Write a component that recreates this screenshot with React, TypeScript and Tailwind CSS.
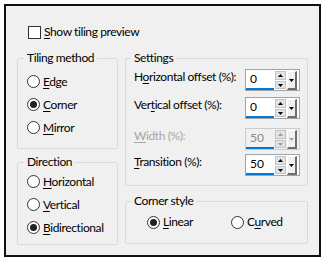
import React from 'react'

const U = ({ children }: { children: React.ReactNode }) => (
  <span className="underline decoration-1 underline-offset-[2px]">{children}</span>
)

function Radio({ checked, label }: { checked?: boolean; label: React.ReactNode }) {
  return (
    <div className="flex items-center gap-[3px]">
      <div className="w-[13px] h-[13px] rounded-full border border-[#333] bg-white flex items-center justify-center">
        {checked && <div className="w-[7px] h-[7px] rounded-full bg-[#222]" />}
      </div>
      <span className="whitespace-nowrap">{label}</span>
    </div>
  )
}

function Tri({ up, color }: { up?: boolean; color: string }) {
  return (
    <svg width="5" height="3" viewBox="0 0 5 3">
      <path d={up ? 'M0 3L2.5 0L5 3Z' : 'M0 0L5 0L2.5 3Z'} fill={color} />
    </svg>
  )
}

function Spin({ value, disabled }: { value: string; disabled?: boolean }) {
  const arrow = disabled ? '#a0a0a0' : '#000'
  return (
    <div
      className={
        'w-[55px] h-[22px] border flex shrink-0 tracking-normal ' +
        (disabled ? 'border-[#cccccc] bg-[#f0f0f0]' : 'border-[#a3a3a3] bg-white')
      }
    >
      <div className="flex-1 flex flex-col pl-[4px] pt-[1px]">
        <span className={'leading-[16px] h-[17px] ' + (disabled ? 'text-[#8a8a8a]' : 'text-black')}>{value}</span>
        <div className="w-[28px] h-[2px] bg-[#0078d7] -ml-[4px]" />
      </div>
      <div className="w-[11px] flex flex-col gap-[1px] py-[1px] mr-[1px]">
        <div className="h-[9px] bg-[#e3e3e3] border border-[#c4c4c4] flex items-center justify-center">
          <Tri up color={arrow} />
        </div>
        <div className="h-[8px] bg-[#e3e3e3] border border-[#c4c4c4] flex items-center justify-center">
          <Tri color={arrow} />
        </div>
      </div>
      <div className="w-[10px] mt-[1px] mr-[2px] bg-[#f0f0f0] border-t border-l border-t-white border-l-white border-r-2 border-b-2 border-r-[#6d6d6d] border-b-[#6d6d6d] flex items-center justify-center">
        <Tri color={arrow} />
      </div>
    </div>
  )
}

function Row({ label, value, disabled, className }: { label: React.ReactNode; value: string; disabled?: boolean; className: string }) {
  return (
    <div className={'flex items-start ' + className}>
      <span className={'w-[111px] whitespace-nowrap leading-[16px] ' + (disabled ? 'text-[#a6a6a6]' : '')}>{label}</span>
      <Spin value={value} disabled={disabled} />
    </div>
  )
}

export default function App() {
  return (
    <div className="w-[325px] h-[260px] bg-white p-1 text-[12px] leading-[16px] tracking-[-0.4px] text-black font-['Lato',sans-serif]">
      <div className="h-[253px] border-2 border-[#111] bg-[#f0f0f0]">
        <div className="pl-[22px] pt-[18px] flex items-center gap-[3px] h-[34px]">
          <div className="w-[13px] h-[13px] border border-[#333] bg-white" />
          <span>
            <U>S</U>how tiling preview
          </span>
        </div>

        <div className="flex mt-[10px] ml-[11px]">
          <div className="w-[101px] flex flex-col">
            <fieldset className="h-[99px] border border-[#d9d9d9] rounded-[2px]">
              <legend className="ml-[6px] px-[3px] leading-[16px]">Tiling method</legend>
              <div className="flex flex-col pl-[9px] mt-[4px]">
                <div className="h-[23px] flex items-center"><Radio label={<><U>E</U>dge</>} /></div>
                <div className="h-[23px] flex items-center"><Radio checked label={<><U>C</U>orner</>} /></div>
                <div className="h-[23px] flex items-center"><Radio label={<><U>M</U>irror</>} /></div>
              </div>
            </fieldset>
            <fieldset className="mt-[5px] h-[91px] border border-[#d9d9d9] rounded-[2px]">
              <legend className="ml-[6px] px-[3px] leading-[16px]">Direction</legend>
              <div className="flex flex-col pl-[9px]">
                <div className="h-[23px] flex items-center"><Radio label={<><U>H</U>orizontal</>} /></div>
                <div className="h-[23px] flex items-center"><Radio label={<><U>V</U>ertical</>} /></div>
                <div className="h-[23px] flex items-center"><Radio checked label={<><U>B</U>idirectional</>} /></div>
              </div>
            </fieldset>
          </div>

          <div className="w-[183px] ml-[7px] flex flex-col">
            <fieldset className="h-[136px] border border-[#d9d9d9] rounded-[2px]">
              <legend className="ml-[5px] px-[3px] leading-[16px]">Settings</legend>
              <div className="flex flex-col pl-[8px]">
                <Row className="mt-[3px]" label={<>H<U>o</U>rizontal offset (%):</>} value="0" />
                <Row className="mt-[6px]" label={<>Ver<U>t</U>ical offset (%):</>} value="0" />
                <Row className="mt-[9px]" disabled label={<><U>W</U>idth (%):</>} value="50" />
                <Row className="mt-[4px]" label={<><U>T</U>ransition (%):</>} value="50" />
              </div>
            </fieldset>
            <fieldset className="mt-[7px] h-[51px] border border-[#d9d9d9] rounded-[2px]">
              <legend className="ml-[5px] px-[3px] leading-[16px]">Corner style</legend>
              <div className="flex pl-[21px] mt-[2px] h-[22px] items-center">
                <div className="w-[84px]"><Radio checked label={<><U>L</U>inear</>} /></div>
                <Radio label={<>C<U>u</U>rved</>} />
              </div>
            </fieldset>
          </div>
        </div>
      </div>
    </div>
  )
}
